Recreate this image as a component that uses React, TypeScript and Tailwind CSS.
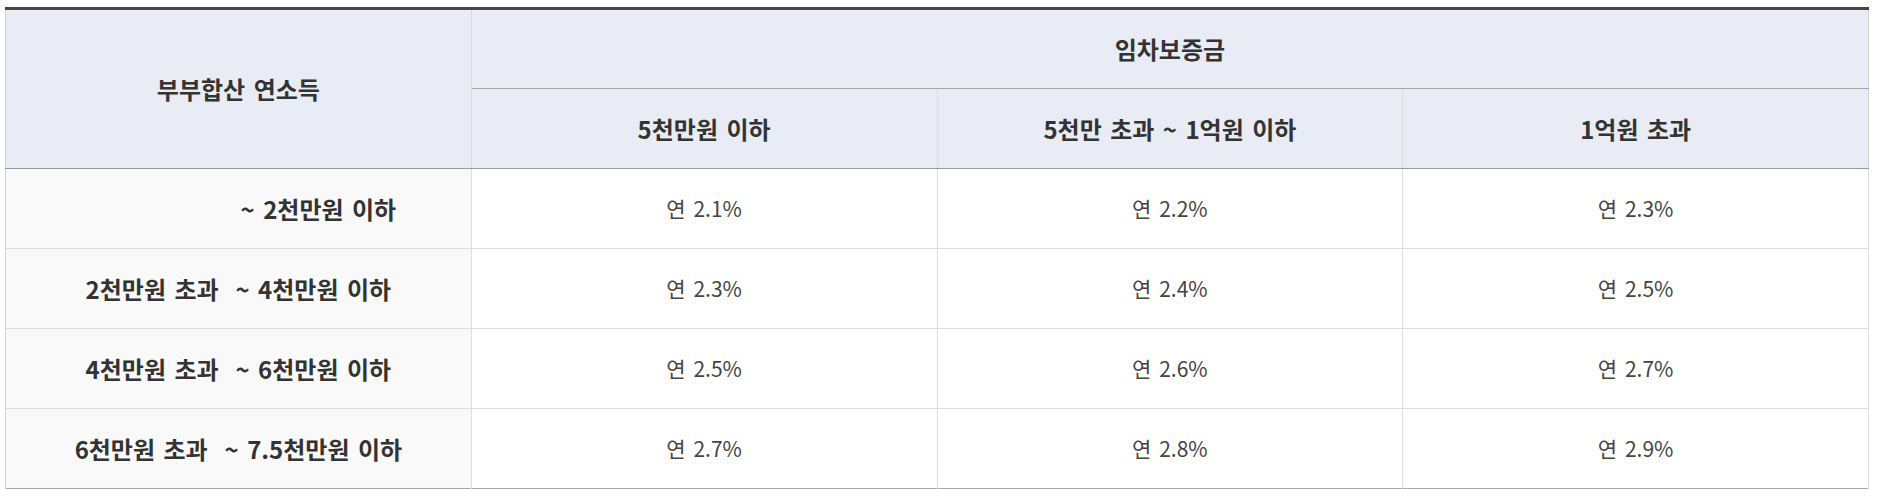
import React from "react";

const rows = [
  { label: "~ 2천만원 이하", offset: true, rates: ["2.1", "2.2", "2.3"] },
  { label: "2천만원 초과\u00a0 ~ 4천만원 이하", offset: false, rates: ["2.3", "2.4", "2.5"] },
  { label: "4천만원 초과\u00a0 ~ 6천만원 이하", offset: false, rates: ["2.5", "2.6", "2.7"] },
  { label: "6천만원 초과\u00a0 ~ 7.5천만원 이하", offset: false, rates: ["2.7", "2.8", "2.9"] },
];

const deposits = ["5천만원 이하", "5천만 초과 ~ 1억원 이하", "1억원 초과"];

export default function App() {
  return (
    <div className="min-h-[497px] bg-white pt-[7px] pl-[5px] font-['Noto_Sans_CJK_KR','Noto_Sans',sans-serif] [word-spacing:3px]">
      <table className="w-[1864px] table-fixed border-collapse border-t-[3px] border-t-[#4a4442] border-b border-b-[#a9a9a9] text-[#333]">
        <thead>
          <tr className="h-[80px] bg-[#e9ecf5]">
            <th
              rowSpan={2}
              className="border-l border-l-[#d4d4d4] border-r border-r-[#d9d9d9] border-b border-b-[#9a9a9a] text-[24px] font-bold"
            >
              부부합산 연소득
            </th>
            <th
              colSpan={3}
              className="border-b border-b-[#a3a3a3] border-r border-r-[#d4d4d4] text-[24px] font-bold"
            >
              임차보증금
            </th>
          </tr>
          <tr className="h-[80px] bg-[#e9ecf5]">
            {deposits.map((d, i) => (
              <th
                key={d}
                className={`border-b border-b-[#9a9a9a] text-[24px] font-bold ${
                  i < 2 ? "border-r border-r-[#dcdcdc]" : "border-r border-r-[#d4d4d4]"
                }`}
              >
                {d}
              </th>
            ))}
          </tr>
        </thead>
        <tbody>
          {rows.map((r, ri) => (
            <tr
              key={r.label}
              className={`h-[80px] ${ri < rows.length - 1 ? "border-b border-b-[#dddddd]" : ""}`}
            >
              <td
                className={`border-l border-l-[#d4d4d4] border-r border-r-[#dddddd] bg-[#f9f9f9] text-center text-[24px] font-bold ${
                  r.offset ? "pl-[160px]" : ""
                }`}
              >
                {r.label}
              </td>
              {r.rates.map((rate, ci) => (
                <td
                  key={ci}
                  className="border-r border-r-[#dddddd] text-center text-[21px] text-[#444]"
                >
                  연 {rate}%
                </td>
              ))}
            </tr>
          ))}
        </tbody>
      </table>
    </div>
  );
}
